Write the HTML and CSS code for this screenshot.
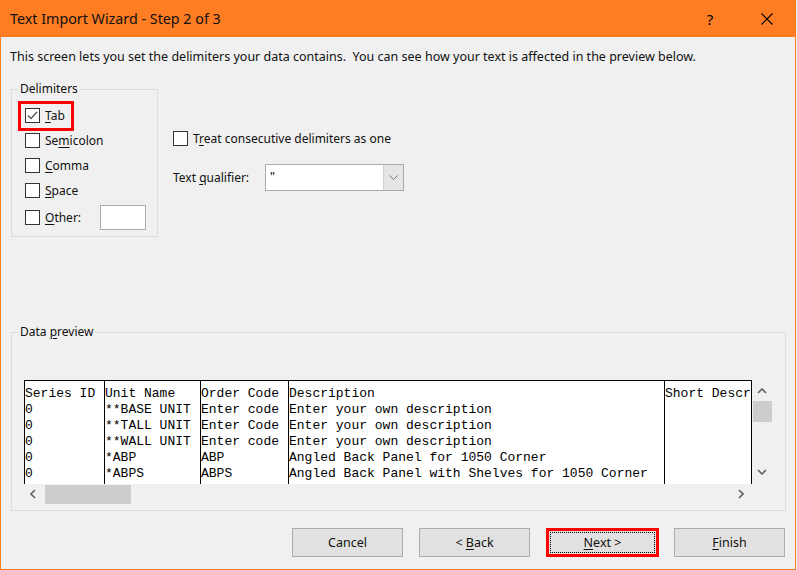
FILE: index.html
```html
<!DOCTYPE html>
<html lang="en">
<head>
    <meta charset="UTF-8">
    <meta name="viewport" content="width=device-width, initial-scale=1.0">
    <title>Text Import Wizard - Step 2 of 3</title>
    <link rel="stylesheet" href="styles.css">
</head>
<body>
    <div class="window">
        <div class="titlebar">
            <span class="title">Text Import Wizard - Step 2 of 3</span>
            <span class="help">?</span>
            <span class="close">
                <svg width="12" height="12" viewBox="0 0 12 12"><path d="M0.5 0.5 L11.5 11.5 M11.5 0.5 L0.5 11.5" stroke="#000" stroke-width="1.1" fill="none"/></svg>
            </span>
        </div>

        <div class="content">
            <p class="intro">This screen lets you set the delimiters your data contains.  You can see how your text is affected in the preview below.</p>

            <div class="top-row">
                <fieldset class="group delims">
                    <legend>Delimiters</legend>
                    <div class="check-row">
                        <span class="check-wrap marked">
                            <span class="box">
                                <svg width="13" height="13" viewBox="0 0 13 13"><path d="M2 6.5 L5 9.5 L11 3" stroke="#5a5a5a" stroke-width="1.4" fill="none"/></svg>
                            </span>
                            <span class="lbl"><u>T</u>ab</span>
                        </span>
                    </div>
                    <div class="check-row">
                        <span class="check-wrap"><span class="box"></span><span class="lbl">Se<u>m</u>icolon</span></span>
                    </div>
                    <div class="check-row">
                        <span class="check-wrap"><span class="box"></span><span class="lbl"><u>C</u>omma</span></span>
                    </div>
                    <div class="check-row">
                        <span class="check-wrap"><span class="box"></span><span class="lbl"><u>S</u>pace</span></span>
                    </div>
                    <div class="check-row other">
                        <span class="check-wrap"><span class="box"></span><span class="lbl"><u>O</u>ther:</span></span>
                        <span class="text-box"></span>
                    </div>
                </fieldset>

                <div class="options">
                    <div class="check-row">
                        <span class="check-wrap"><span class="box"></span><span class="lbl">T<u>r</u>eat consecutive delimiters as one</span></span>
                    </div>
                    <div class="qualifier">
                        <span class="lbl">Text <u>q</u>ualifier:</span>
                        <span class="combo">
                            <span class="combo-value">"</span>
                            <span class="combo-btn">
                                <svg width="9" height="5" viewBox="0 0 9 5"><path d="M0.5 0.5 L4.5 4.5 L8.5 0.5" stroke="#777" stroke-width="1" fill="none"/></svg>
                            </span>
                        </span>
                    </div>
                </div>
            </div>

            <fieldset class="group preview">
                <legend>Data <u>p</u>review</legend>
                <div class="preview-box">
                    <div class="grid">
                        <div class="col c1">Series ID
0
0
0
0
0</div>
                        <div class="col c2">Unit Name
**BASE UNIT
**TALL UNIT
**WALL UNIT
*ABP
*ABPS</div>
                        <div class="col c3">Order Code
Enter code
Enter Code
Enter code
ABP
ABPS</div>
                        <div class="col c4">Description
Enter your own description
Enter your own description
Enter your own description
Angled Back Panel for 1050 Corner
Angled Back Panel with Shelves for 1050 Corner</div>
                        <div class="col c5">Short Descr</div>
                        <div class="col c6"></div>
                    </div>
                    <div class="vscroll">
                        <svg width="10" height="6" viewBox="0 0 10 6"><path d="M1 5 L5 1 L9 5" stroke="#606060" stroke-width="1.6" fill="none"/></svg>
                        <span class="vthumb"></span>
                        <svg class="down" width="10" height="6" viewBox="0 0 10 6"><path d="M1 1 L5 5 L9 1" stroke="#606060" stroke-width="1.6" fill="none"/></svg>
                    </div>
                    <div class="hscroll">
                        <svg width="6" height="10" viewBox="0 0 6 10"><path d="M5 1 L1 5 L5 9" stroke="#606060" stroke-width="1.6" fill="none"/></svg>
                        <span class="hthumb"></span>
                        <svg class="right" width="6" height="10" viewBox="0 0 6 10"><path d="M1 1 L5 5 L1 9" stroke="#606060" stroke-width="1.6" fill="none"/></svg>
                    </div>
                    <div class="corner"></div>
                </div>
            </fieldset>

            <div class="buttons">
                <button type="button">Cancel</button>
                <button type="button">&lt; <u>B</u>ack</button>
                <button type="button" class="default"><span class="focus"><u>N</u>ext &gt;</span></button>
                <button type="button" class="last"><u>F</u>inish</button>
            </div>
        </div>
    </div>
</body>
</html>
```

FILE: styles.css
```css
* {
    box-sizing: border-box;
}
body {
    margin: 0;
    background-color: #F0F0F0;
    font-family: "Noto Sans", "Open Sans", sans-serif;
    font-size: 12px;
    color: #000;
}
u {
    text-underline-offset: 2px;
}
.window {
    width: 796px;
    height: 570px;
    border: 1px solid #FF7D22;
    border-top: none;
    background-color: #F0F0F0;
    display: flex;
    flex-direction: column;
}
.titlebar {
    height: 37px;
    background-color: #FF7D22;
    display: flex;
    align-items: center;
    margin: 0 -1px;
    padding-left: 10px;
}
.title {
    font-size: 14.3px;
    color: #111;
    flex: 1;
}
.help {
    font-size: 15px;
    width: 46px;
    text-align: center;
    margin-right: 11px;
}
.close {
    width: 46px;
    display: flex;
    justify-content: center;
    margin-right: 6px;
}
.content {
    padding: 0 0 0 10px;
    flex: 1;
    display: flex;
    flex-direction: column;
}
.intro {
    margin: 12px 0 0 -1px;
    font-size: 12.5px;
    line-height: 16px;
    white-space: pre;
    color: #111;
}
.top-row {
    display: flex;
    margin-top: 16px;
}
.group {
    margin: 0;
    border: 1px solid #DCDCDC;
    padding: 0;
    min-width: 0;
}
.group legend {
    margin-left: -7px;
    padding: 0 2px;
    line-height: 16px;
    color: #111;
}
.delims {
    width: 147px;
    padding: 6px 0 6px 13px;
}
.preview legend {
    margin-left: -6px;
}
.check-row {
    height: 25px;
    display: flex;
    align-items: center;
}
.check-wrap {
    display: inline-flex;
    align-items: center;
    height: 16px;
}
.check-wrap.marked {
    outline: 3px solid #FF0000;
    outline-offset: 4px;
    padding-right: 2px;
}
.box {
    width: 15px;
    height: 15px;
    border: 1px solid #333;
    background-color: #FFF;
    display: inline-flex;
    align-items: center;
    justify-content: center;
    margin-right: 5px;
}
.lbl {
    color: #111;
    line-height: 16px;
}
.check-row.other {
    margin-top: 2px;
}
.text-box {
    width: 46px;
    height: 25px;
    border: 1px solid #ABABAB;
    background-color: #FFF;
    margin-left: 19px;
}
.options {
    margin-left: 15px;
    padding-top: 45px;
}
.qualifier {
    display: flex;
    align-items: center;
    margin-top: 13px;
}
.combo {
    margin-left: 16px;
    width: 139px;
    height: 27px;
    border: 1px solid #ABABAB;
    background-color: #FFF;
    display: flex;
}
.combo-value {
    flex: 1;
    padding-left: 4px;
    line-height: 23px;
}
.combo-btn {
    width: 20px;
    background-color: #E5E5E5;
    border-left: 1px solid #D0D0D0;
    display: flex;
    align-items: center;
    justify-content: center;
}
.preview {
    width: 775px;
    margin-top: 87px;
    padding: 40px 13px 6px 12px;
}
.preview-box {
    display: grid;
    grid-template-columns: 728px 20px;
    grid-template-rows: 104px 20px;
}
.grid {
    background-color: #FFF;
    border-top: 1px solid #000;
    display: flex;
    overflow: hidden;
    font-family: "Liberation Mono", "Courier New", monospace;
    font-size: 13px;
    line-height: 16px;
    color: #000;
}
.col {
    flex-shrink: 0;
    border-left: 1px solid #000;
    white-space: pre;
    overflow: hidden;
    padding-top: 5px;
}
.c1 { width: 80px; }
.c2 { width: 96px; }
.c3 { width: 88px; }
.c4 { width: 376px; }
.c5 { width: 87px; }
.c6 { width: 20px; }
.vscroll {
    display: flex;
    flex-direction: column;
    align-items: center;
    padding-top: 8px;
}
.vthumb {
    width: 19px;
    height: 21px;
    background-color: #CDCDCD;
    margin-top: 7px;
    margin-left: 1px;
}
.vscroll .down {
    margin-top: auto;
    margin-bottom: 9px;
}
.hscroll {
    display: flex;
    align-items: center;
    padding-left: 6px;
}
.hthumb {
    width: 86px;
    height: 19px;
    background-color: #CDCDCD;
    margin-left: 9px;
    margin-top: 1px;
}
.hscroll .right {
    margin-left: auto;
    margin-right: 8px;
}
.buttons {
    display: flex;
    justify-content: flex-end;
    gap: 16px;
    margin-top: 17px;
    padding-right: 10px;
}
button {
    width: 111px;
    height: 29px;
    border: 1px solid #ADADAD;
    background-color: #E1E1E1;
    font-family: "Noto Sans", "Open Sans", sans-serif;
    font-size: 12.5px;
    color: #111;
    padding: 0;
}
button.default {
    border: 3px solid #FF0000;
    padding: 1px;
    width: 113px;
}
button.last {
    margin-left: -1px;
}
.focus {
    display: flex;
    align-items: center;
    justify-content: center;
    height: 100%;
    border: 1px dotted #000;
}
```
